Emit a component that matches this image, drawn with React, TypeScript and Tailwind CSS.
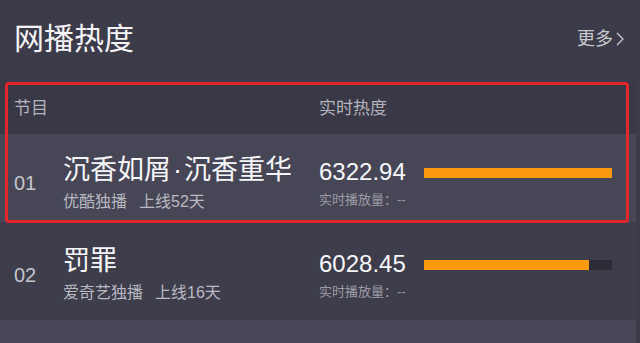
const font = { fontFamily: '"Liberation Sans", "Noto Sans CJK SC", sans-serif' }

type Show = {
  rank: string
  title: string
  platform: string
  days: number
  heat: string
  pct: number
  bg: string
  h: string
  pt: string
}

const shows: Show[] = [
  { rank: "01", title: "沉香如屑·沉香重华", platform: "优酷独播", days: 52, heat: "6322.94", pct: 100, bg: "bg-[#474656]", h: "h-[88px]", pt: "pt-[10px]" },
  { rank: "02", title: "罚罪", platform: "爱奇艺独播", days: 16, heat: "6028.45", pct: 88, bg: "bg-[#3e3d4b]", h: "h-[98px]", pt: "pt-[7px]" },
]

// the middle dot in the source font is a little wider
function Title({ text }: { text: string }) {
  const parts = text.split("·")
  return (
    <div className="text-[27px] leading-none text-[#f6f6f8] whitespace-nowrap">
      {parts.map((p, i) => (
        <span key={i}>
          {i > 0 && <span className="px-[2px]">·</span>}
          {p}
        </span>
      ))}
    </div>
  )
}

function Row({ s }: { s: Show }) {
  return (
    <div className={`flex items-center ${s.bg} ${s.h} ${s.pt}`}>
      <div className="w-[63px] pl-[14px] text-[20px] leading-none text-[#c5c5cc]">{s.rank}</div>
      <div className="w-[256px] flex flex-col">
        <Title text={s.title} />
        <div className="mt-[10px] text-[16px] leading-none text-[#b9b9c1] whitespace-nowrap">
          {s.platform}
          <span className="ml-3">上线{s.days}天</span>
        </div>
      </div>
      <div className="flex items-start">
        <div className="w-[105px] flex flex-col">
          <div className="text-[24px] leading-none text-[#f6f6f8]">{s.heat}</div>
          <div className="mt-[9px] text-[13px] leading-none text-[#9c9ca6] whitespace-nowrap">实时播放量：--</div>
        </div>
        <div className="mt-[8px] w-[188px] h-[10px] bg-[#2c2b36]">
          <div className="h-full bg-[#fb9a0e]" style={{ width: `${s.pct}%` }} />
        </div>
      </div>
    </div>
  )
}

export default function App() {
  return (
    <div className="relative w-[640px] h-[343px] overflow-hidden bg-[#3c3b49]" style={font}>
      <div className="h-[82px] flex items-center justify-between pl-[14px] pr-[16px] pb-[4px]">
        <h1 className="text-[30px] leading-none text-[#f4f4f6]">网播热度</h1>
        <div className="flex items-center gap-[3px] text-[18px] leading-none text-[#c8c8cc]">
          更多
          <svg width="8" height="14" viewBox="0 0 8 14" fill="none">
            <path d="M1 1 L7 7 L1 13" stroke="#c8c8cc" strokeWidth="1.3" />
          </svg>
        </div>
      </div>

      <div className="w-[636px]">
        <div className="h-[52px] flex items-center bg-[#393846] text-[17px] leading-none text-[#b4b4bc]">
          <div className="w-[319px] pl-[14px]">节目</div>
          <div>实时热度</div>
        </div>
        {shows.map((s) => (
          <Row key={s.rank} s={s} />
        ))}
        {/* next row, cut off by the screenshot edge */}
        <div className="h-[23px] bg-[#474656]" />
      </div>

      <div className="absolute left-[5px] top-[82px] w-[624px] h-[141px] border-[3px] border-[#e3262b] rounded-[4px] pointer-events-none" />
    </div>
  )
}
